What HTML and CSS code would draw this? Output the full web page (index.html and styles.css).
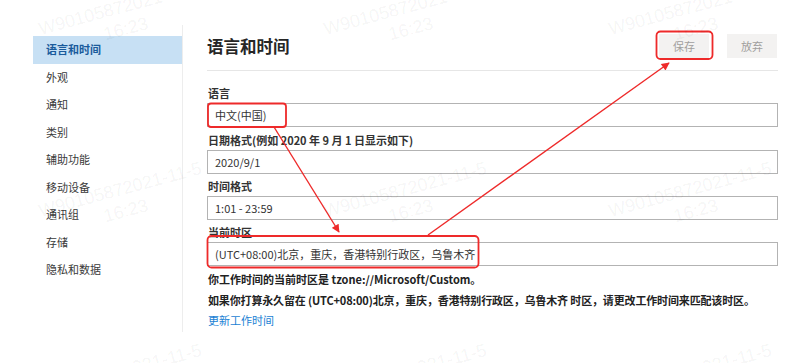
FILE: index.html
```html
<!DOCTYPE html>
<html lang="zh-CN">
<head>
<meta charset="utf-8">
<title>语言和时间</title>
<link rel="stylesheet" href="styles.css">
</head>
<body>
<div class="page">
  <nav class="sidebar">
    <a class="nav-item active">语言和时间</a>
    <a class="nav-item">外观</a>
    <a class="nav-item">通知</a>
    <a class="nav-item">类别</a>
    <a class="nav-item">辅助功能</a>
    <a class="nav-item">移动设备</a>
    <a class="nav-item">通讯组</a>
    <a class="nav-item">存储</a>
    <a class="nav-item">隐私和数据</a>
  </nav>
  <main class="content">
    <header class="head">
      <h1 class="title">语言和时间</h1>
      <div class="actions">
        <button class="btn">保存</button>
        <button class="btn">放弃</button>
      </div>
    </header>
    <div class="form">
      <div class="group">
        <div class="label">语言</div>
        <div class="input">中文(中国)</div>
      </div>
      <div class="group">
        <div class="label">日期格式(例如 2020 年 9 月 1 日显示如下)</div>
        <div class="input">2020/9/1</div>
      </div>
      <div class="group">
        <div class="label">时间格式</div>
        <div class="input">1:01 - 23:59</div>
      </div>
      <div class="group">
        <div class="label">当前时区</div>
        <div class="input">(UTC+08:00)北京，重庆，香港特别行政区，乌鲁木齐</div>
      </div>
      <p class="note">你工作时间的当前时区是 tzone://Microsoft/Custom。</p>
      <p class="note note-long">如果你打算永久留在 (UTC+08:00)北京，重庆，香港特别行政区，乌鲁木齐 时区，请更改工作时间来匹配该时区。</p>
      <a class="link">更新工作时间</a>
    </div>
  </main>
</div>

<svg class="annot" width="806" height="363" viewBox="0 0 806 363" xmlns="http://www.w3.org/2000/svg">
  <defs>
    <marker id="ah" viewBox="0 0 10 10" refX="9" refY="5" markerWidth="10" markerHeight="8" markerUnits="userSpaceOnUse" orient="auto">
      <path d="M0,0 L10,5 L0,10 z" fill="#ee2a2a"/>
    </marker>
  </defs>
  <g fill="none" stroke="#ee2a2a" stroke-width="1.8">
    <rect x="208" y="103.5" width="78" height="23.5" rx="3"/>
    <rect x="656.5" y="31.5" width="56" height="27.5" rx="4"/>
    <rect x="207.5" y="236" width="271" height="31.5" rx="4"/>
    <line x1="274" y1="127" x2="339" y2="232" stroke-width="1.4" marker-end="url(#ah)"/>
    <line x1="428" y1="235" x2="669" y2="63" stroke-width="1.4" marker-end="url(#ah)"/>
  </g>
</svg>

<div class="watermarks">
  <div class="wm-grid">
    <div class="wm"><span>W90105872021-11-5</span><span>16:23</span></div>
    <div class="wm"><span>W90105872021-11-5</span><span>16:23</span></div>
    <div class="wm"><span>W90105872021-11-5</span><span>16:23</span></div>
    <div class="wm"><span>W90105872021-11-5</span><span>16:23</span></div>
    <div class="wm"><span>W90105872021-11-5</span><span>16:23</span></div>
    <div class="wm"><span>W90105872021-11-5</span><span>16:23</span></div>
    <div class="wm"><span>W90105872021-11-5</span><span>16:23</span></div>
    <div class="wm"><span>W90105872021-11-5</span><span>16:23</span></div>
    <div class="wm"><span>W90105872021-11-5</span><span>16:23</span></div>
  </div>
</div>
</body>
</html>
```

FILE: styles.css
```css
html, body {
  margin: 0;
  padding: 0;
  width: 806px;
  height: 363px;
  overflow: hidden;
  background: #ffffff;
}

body {
  position: relative;
  font-family: "Noto Sans CJK SC", "Noto Sans", sans-serif;
  font-size: 11px;
  color: #333333;
}

.page {
  display: flex;
  align-items: flex-start;
  padding: 25px 0 0 33px;
}

.sidebar {
  display: flex;
  flex-direction: column;
  width: 150px;
  height: 307px;
  padding-top: 11px;
  box-sizing: border-box;
  border-right: 1px solid #ededed;
  flex: none;
}

.nav-item {
  display: block;
  height: 27.5px;
  line-height: 27.5px;
  padding-left: 13px;
  color: #3a3a3a;
  font-size: 11px;
}

.nav-item.active {
  background: #c7e0f4;
  color: #1a5b9c;
  font-weight: 700;
}

.content {
  width: 571px;
  margin-left: 24px;
  padding-top: 9px;
}

.head {
  display: flex;
  justify-content: space-between;
  align-items: center;
  height: 24px;
  padding-bottom: 12px;
  border-bottom: 1px solid #e6e6e6;
}

.title {
  margin: 0;
  font-size: 16.5px;
  line-height: 24px;
  font-weight: 700;
  color: #262626;
}

.actions {
  display: flex;
  gap: 18px;
  margin-right: 1px;
}

.btn {
  width: 50px;
  height: 24px;
  border: none;
  background: #f3f2f1;
  color: #a19f9d;
  font-family: inherit;
  font-size: 11px;
  padding: 0;
}

.form {
  padding-top: 10px;
}

.group {
  display: flex;
  flex-direction: column;
}

.label {
  padding: 4.33px 0 2px 1px;
  line-height: 16px;
  font-weight: 700;
  color: #333333;
}

.input {
  height: 24px;
  box-sizing: border-box;
  border: 1px solid #b3b3b3;
  padding-left: 7px;
  line-height: 22px;
  color: #333333;
}

.note {
  margin: 5px 0 0 1px;
  line-height: 16px;
  font-weight: 700;
  color: #222222;
  white-space: nowrap;
}

.note-long {
  letter-spacing: -0.15px;
}

.link {
  display: block;
  margin: 4px 0 0 1px;
  line-height: 16px;
  color: #1a7fd4;
}

.annot {
  position: absolute;
  left: 0;
  top: 0;
  pointer-events: none;
}

.watermarks {
  position: absolute;
  left: 0;
  top: 0;
  width: 806px;
  height: 363px;
  overflow: hidden;
  pointer-events: none;
}

.wm-grid {
  display: grid;
  grid-template-columns: repeat(3, 285px);
  grid-template-rows: repeat(3, 182px);
  place-items: center;
  margin: -73px 0 0 -19.5px;
}

.wm {
  display: flex;
  flex-direction: column;
  align-items: center;
  transform: rotate(-15deg);
  font-family: "Liberation Sans", sans-serif;
  font-size: 18px;
  line-height: 22px;
  color: rgba(0, 0, 0, 0.055);
  white-space: nowrap;
}
```
